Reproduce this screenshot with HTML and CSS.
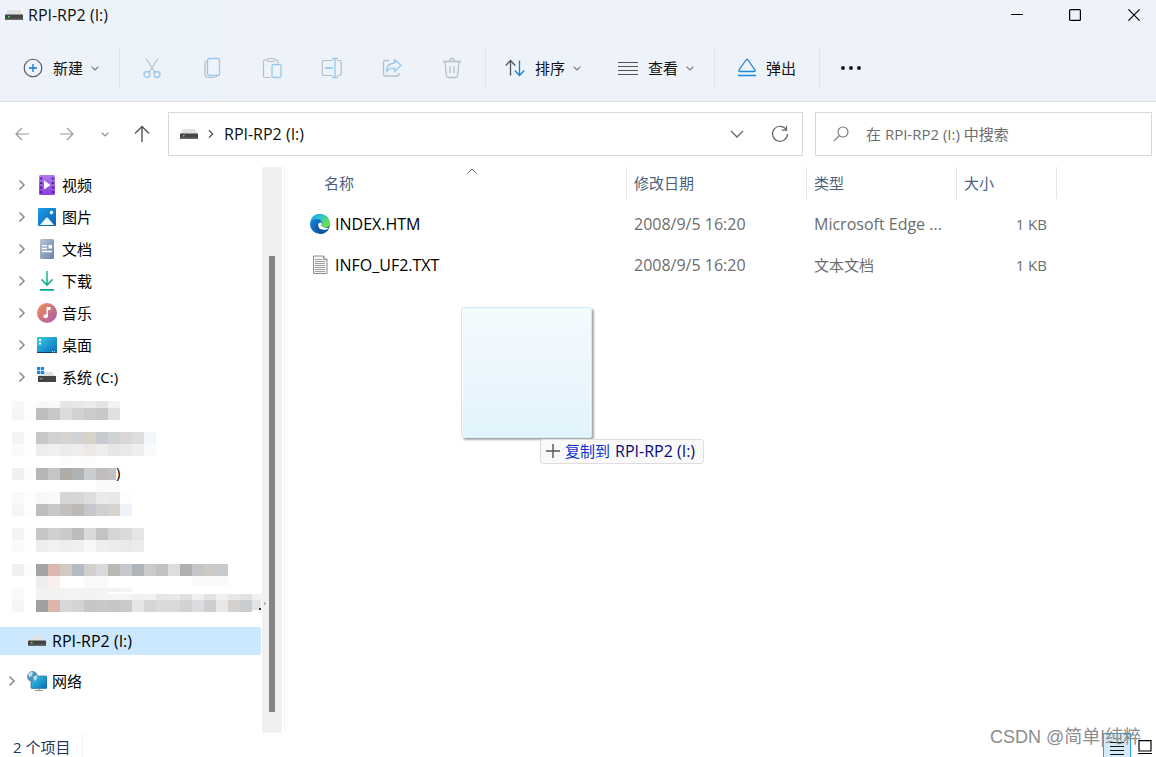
FILE: index.html
```html
<!DOCTYPE html>
<html lang="zh-CN">
<head>
<meta charset="utf-8">
<title>RPI-RP2 (I:)</title>
<link rel="stylesheet" href="styles.css">
</head>
<body>
<svg class="defs" aria-hidden="true">
  <defs>
    <linearGradient id="gVideo" x1="0" y1="0" x2="0" y2="1"><stop offset="0" stop-color="#b07af0"/><stop offset="1" stop-color="#8a3fe0"/></linearGradient>
    <linearGradient id="gPic" x1="0" y1="0" x2="1" y2="1"><stop offset="0" stop-color="#1c9de6"/><stop offset="1" stop-color="#0863b0"/></linearGradient>
    <linearGradient id="gDoc" x1="0" y1="0" x2="1" y2="1"><stop offset="0" stop-color="#b4c6da"/><stop offset="1" stop-color="#6884a4"/></linearGradient>
    <linearGradient id="gDown" x1="0" y1="0" x2="0" y2="1"><stop offset="0" stop-color="#35c48a"/><stop offset="1" stop-color="#0f9f9f"/></linearGradient>
    <linearGradient id="gMusic" x1="0" y1="0" x2="1" y2="1"><stop offset="0.1" stop-color="#ee8a5c"/><stop offset="1" stop-color="#a35bb0"/></linearGradient>
    <linearGradient id="gDesk" x1="0" y1="0" x2="1" y2="1"><stop offset="0" stop-color="#35d3e4"/><stop offset="1" stop-color="#0c66bd"/></linearGradient>
    <linearGradient id="gEdgeTop" x1="0" y1="0" x2="1" y2="0.5"><stop offset="0" stop-color="#1d9fe0"/><stop offset="0.5" stop-color="#2fc3d2"/><stop offset="1" stop-color="#6ee04c"/></linearGradient>
    <linearGradient id="gEdgeBody" x1="0" y1="0" x2="1" y2="1"><stop offset="0" stop-color="#1188dc"/><stop offset="1" stop-color="#0d4f9e"/></linearGradient>
  </defs>
  <symbol id="drive" viewBox="0 0 18 10">
    <path d="M3 0h12l3 5H0z" fill="#dfe1e3"/>
    <rect y="4.600" width="18" height="5.400" rx=".6" fill="#444"/>
    <rect y="8.500" width="18" height="1.500" rx=".6" fill="#666"/>
    <rect x="3" y="6" width="1.500" height="1.500" fill="#3fff4a"/>
  </symbol>
  <symbol id="right" viewBox="0 0 8 12"><path d="M1.500 1.500 6 6l-4.500 4.500" fill="none" stroke="currentColor" stroke-width="1.500"/></symbol>
  <symbol id="down" viewBox="0 0 8 5"><path d="M.6.6 4 4 7.400.6" fill="none" stroke="currentColor" stroke-width="1.100"/></symbol>
</svg>

<div class="window">
  <header class="top">
    <div class="titlebar">
      <svg class="drive"><use href="#drive"/></svg>
      <h1 class="title">RPI-RP2 (I:)</h1>
      <div class="caption">
        <button class="cap" aria-label="最小化"><svg width="12" height="12"><path d="M0 5.500h12" stroke="#000"/></svg></button>
        <button class="cap" aria-label="最大化"><svg width="12" height="12"><rect x=".6" y=".6" width="10.800" height="10.800" rx="1" fill="none" stroke="#000" stroke-width="1.200"/></svg></button>
        <button class="cap" aria-label="关闭"><svg width="12" height="12"><path d="M.4.4l11.200 11.200M11.600.4.400 11.600" stroke="#000" stroke-width="1.200"/></svg></button>
      </div>
    </div>
    <div class="commands">
      <button class="cmd new">
        <svg width="20" height="20" fill="none"><circle cx="10" cy="10" r="8.800" stroke="#555" stroke-width="1.100"/><path d="M10 6v8M6 10h8" stroke="#0f78c8" stroke-width="1.300"/></svg>
        <span>新建</span><svg class="chev"><use href="#down"/></svg>
      </button>
      <div class="group">
        <button class="tool" aria-label="剪切"><svg width="20" height="22" fill="none"><path d="M4 1.500l9.500 14.500M16 1.500 6.500 16" stroke="#b9bfc6" stroke-width="1.200"/><circle cx="5" cy="17.500" r="3" stroke="#98c8ee" stroke-width="1.300"/><circle cx="15" cy="17.500" r="3" stroke="#98c8ee" stroke-width="1.300"/></svg></button>
        <button class="tool" aria-label="复制"><svg width="20" height="22" fill="none"><path d="M5 4Q3 4.500 3 6.500v10q0 4 4 4h5q2 0 3-1.500" stroke="#b9bfc6" stroke-width="1.200"/><rect x="5.500" y="1.500" width="12" height="17" rx="2" stroke="#98c8ee" stroke-width="1.300"/></svg></button>
        <button class="tool" aria-label="粘贴"><svg width="20" height="22" fill="none"><path d="M6 3H3q-1.500 0-1.500 1.500V19q0 1.500 1.500 1.500h5M12 3h2.500Q16 3 16 4.500V6" stroke="#b9bfc6" stroke-width="1.200"/><rect x="5.500" y="1.500" width="7" height="3" rx="1.500" stroke="#b9bfc6" stroke-width="1.200"/><rect x="10" y="7.500" width="9" height="13" rx="1.500" stroke="#98c8ee" stroke-width="1.300"/></svg></button>
        <button class="tool" aria-label="重命名"><svg width="22" height="22" fill="none"><path d="M11.500 3.500H3q-1.700 0-1.700 1.700v11.600q0 1.700 1.700 1.700h8.500M16 3.500h2.500q1.700 0 1.700 1.700v11.600q0 1.700-1.700 1.700H16" stroke="#b9bfc6" stroke-width="1.200"/><path d="M4 11h8" stroke="#98c8ee" stroke-width="1.800"/><path d="M11 1.500h6M11 20.500h6M14 1.500v19" stroke="#98c8ee" stroke-width="1.300"/></svg></button>
        <button class="tool" aria-label="共享"><svg width="20" height="22" fill="none"><path d="M7 3.500H3.500Q1.500 3.500 1.500 5.500V17q0 2 2 2H15q2 0 2-2v-1" stroke="#b9bfc6" stroke-width="1.300"/><path d="M12.500 2.500l6.500 6-6.500 6v-3.400q-5-.4-8 3.400 0-8 8-8.500z" stroke="#98c8ee" stroke-width="1.300" stroke-linejoin="round"/></svg></button>
        <button class="tool" aria-label="删除"><svg width="20" height="22" fill="none"><path d="M1 4.500h18M3 4.500l1.400 14q.2 2 2 2h7.200q1.800 0 2-2l1.400-14M7.500 4.500q0-3 2.500-3t2.500 3M8 9v7M12 9v7" stroke="#b9bfc6" stroke-width="1.300"/></svg></button>
      </div>
      <button class="cmd sort">
        <svg width="20" height="18" fill="none" stroke-width="1.300"><path d="M5.500 16.500V1.500M.8 6.500l4.700-5 4.700 5" stroke="#555"/><path d="M14.500 1.500v15M9.800 11.500l4.700 5 4.700-5" stroke="#1280d8"/></svg>
        <span>排序</span><svg class="chev"><use href="#down"/></svg>
      </button>
      <button class="cmd view">
        <svg width="20" height="14"><path d="M0 1.500h20M0 5.500h20M0 9.500h20M0 13.500h20" stroke="#555"/></svg>
        <span>查看</span><svg class="chev"><use href="#down"/></svg>
      </button>
      <button class="cmd eject">
        <svg width="18" height="20" fill="none" stroke="#1c86d8" stroke-width="1.300"><path d="M8 2Q9 .8 10 2l7 10q.6 1.500-1 1.500H2Q.4 13.500 1 12zM0 17.500h18" stroke-linejoin="round"/></svg>
        <span>弹出</span>
      </button>
      <button class="cmd more" aria-label="更多"><svg width="20" height="4" fill="#111"><circle cx="2" cy="2" r="1.900"/><circle cx="10" cy="2" r="1.900"/><circle cx="18" cy="2" r="1.900"/></svg></button>
    </div>
  </header>

  <div class="addressrow">
    <nav class="history">
      <button aria-label="后退"><svg width="14" height="14" class="dim"><path d="M14 7H1M7 1 1 7l6 6"/></svg></button>
      <button aria-label="前进"><svg width="14" height="14" class="dim"><path d="M0 7h13M7 1l6 6-6 6"/></svg></button>
      <button class="small" aria-label="最近的位置"><svg class="chev"><use href="#down"/></svg></button>
      <button class="up" aria-label="上移"><svg width="16" height="18"><path d="M8 17V2M1 8.500 8 1.500l7 7"/></svg></button>
    </nav>
    <div class="address">
      <svg class="drive"><use href="#drive"/></svg>
      <svg class="crumb"><use href="#right"/></svg>
      <a href="#" class="path">RPI-RP2 (I:)</a>
      <button aria-label="历史记录"><svg width="14" height="8" fill="none"><path d="M1 1l6 6 6-6" stroke="#666" stroke-width="1.300"/></svg></button>
      <button class="refresh" aria-label="刷新"><svg width="18" height="18" fill="none"><path d="M15.500 5A7.500 7.500 0 1 0 16.500 9M15.500.8v4.400h-4.700" stroke="#666" stroke-width="1.200"/></svg></button>
    </div>
    <label class="search">
      <svg width="16" height="16" fill="none"><circle cx="10" cy="6" r="5" stroke="#777" stroke-width="1.100"/><path d="M6.500 9.500.8 15.200" stroke="#777" stroke-width="1.100"/></svg>
      <input type="text" aria-label="搜索" placeholder="在 RPI-RP2 (I:) 中搜索">
    </label>
  </div>

  <main class="body">
    <aside class="side">
      <div class="tree">
        <a href="#" class="node"><svg class="exp"><use href="#right"/></svg><svg width="20" height="20"><rect x="2" width="16" height="20" rx="1.500" fill="url(#gVideo)"/><path d="M3.200 3.500h2M3.200 8h2M3.200 12.500h2M3.200 17h2M14.800 3.500h2M14.800 8h2M14.800 12.500h2M14.800 17h2" stroke="#4b2184" stroke-width="1.800"/><path d="M7 5.500 13.500 10 7 14.500z" fill="#fff"/></svg>视频</a>
        <a href="#" class="node"><svg class="exp"><use href="#right"/></svg><svg width="20" height="20"><rect x="1" y="1" width="18" height="18" rx="1" fill="url(#gPic)"/><path d="M3 18l6.200-7.200q.8-.8 1.600 0L17 18z" fill="#eef6fd"/><circle cx="14.500" cy="5.500" r="1.700" fill="#fff"/></svg>图片</a>
        <a href="#" class="node"><svg class="exp"><use href="#right"/></svg><svg width="20" height="20"><rect x="3" width="14" height="20" rx="1.500" fill="url(#gDoc)"/><path d="M5 6.700h5M5 9.500h5M5 12.500h10" stroke="#fff" stroke-width="1.300"/><rect x="11.500" y="6" width="3.500" height="3.500" fill="#fff"/></svg>文档</a>
        <a href="#" class="node"><svg class="exp"><use href="#right"/></svg><svg width="20" height="20"><path d="M9.200 0h1.600v12l4.200-4.200 1.100 1.100L10 15.200 3.900 8.900 5 7.800 9.200 12zM3 18h14v1.800H3z" fill="url(#gDown)"/></svg>下载</a>
        <a href="#" class="node"><svg class="exp"><use href="#right"/></svg><svg width="20" height="20"><circle cx="10" cy="10" r="10" fill="url(#gMusic)"/><ellipse cx="8.700" cy="13.200" rx="2.200" ry="2" fill="#fff"/><path d="M9.500 13V4h4v3h-2.600v6z" fill="#fff"/></svg>音乐</a>
        <a href="#" class="node"><svg class="exp"><use href="#right"/></svg><svg width="20" height="20"><rect y="2" width="20" height="16" rx="1" fill="url(#gDesk)"/><path d="M0 17h20v.2q0 .8-.8.8H.8Q0 18 0 17.200z" fill="#063c6c"/><path d="M2 4h2v2H2zM2 7.500h2v2H2z" fill="#fff"/><path d="M15 16.800h1M17 16.800h1" stroke="#fff"/></svg>桌面</a>
        <a href="#" class="node"><svg class="exp"><use href="#right"/></svg><svg width="20" height="20"><path d="M3 5h12l4 5H1z" fill="#dfe1e3"/><rect x="1" y="9" width="18" height="6" rx=".6" fill="#444"/><rect x="3.500" y="11" width="1.500" height="1.500" fill="#3fff4a"/><path d="M0 0h3.200v3.200H0zM3.900 0h3.200v3.200H3.900zM0 3.900h3.200v3.200H0zM3.900 3.900h3.200v3.200H3.900z" fill="#1688d8"/></svg>系统 (C:)</a>
        <svg class="mosaic" width="268" height="234" shape-rendering="crispEdges" aria-hidden="true"><text x="116" y="85">)</text><path d="M259 215h2v2h-2z" fill="#333"/><path d="M264 209l2 1.500-2 1.500z" fill="#aaa"/></svg>
        <a href="#" class="node root selected"><svg class="drive"><use href="#drive"/></svg>RPI-RP2 (I:)</a>
        <a href="#" class="node root network"><svg class="exp"><use href="#right"/></svg><svg width="20" height="20"><rect x="4" y="5" width="16" height="12.500" rx=".8" fill="url(#gDesk)" stroke="#15618f" stroke-width=".6"/><path d="M12 17.500V19.500M8 19.500h8" stroke="#8b979f" stroke-width="1.200"/><circle cx="5.500" cy="5.500" r="5.400" fill="#4d94bf"/><path d="M1 3Q4 0 6 1L5 5 2 6zM6 6l4-2q1 4-2.500 6z" fill="#b9deef"/></svg>网络</a>
      </div>
      <div class="scroll"><div class="thumb"></div></div>
    </aside>

    <section class="files">
      <table>
        <colgroup><col class="c-name"><col class="c-date"><col class="c-type"><col class="c-size"><col></colgroup>
        <thead><tr>
          <th class="name"><span>名称</span><svg class="asc" width="10" height="6" fill="none"><path d="M.5 5.500 5 1l4.500 4.500" stroke="#666"/></svg></th>
          <th><span>修改日期</span></th><th><span>类型</span></th><th><span>大小</span></th><td></td>
        </tr></thead>
        <tbody>
          <tr><td class="name"><a href="#"><svg width="20" height="20"><circle cx="10" cy="10" r="10" fill="url(#gEdgeBody)"/><path d="M.2 9Q1 0 10 0q9 .4 10 9 0 4.500-4.500 4.500-3 0-4-1.500 1.500-1.500.5-4Q10.500 5 6.500 5 2 5.200.2 9z" fill="url(#gEdgeTop)"/><path d="M11.500 8.500Q8.500 8 8 11q0 4.500 5 5 3 .2 6-1.500-1.500-.5-3.500-.8-3-.2-4.300-1.900 1.200-1.500.3-3.300z" fill="#fff"/><path d="M6 11q-1 6 5 8.900 5-.4 7.800-5-3 1.300-5.800.9Q7.500 15.300 8 10.300 6.500 9.500 6 11z" fill="#0e55a6"/></svg>INDEX.HTM</a></td><td>2008/9/5 16:20</td><td>Microsoft Edge ...</td><td class="num">1 KB</td><td></td></tr>
          <tr><td class="name"><a href="#"><svg width="20" height="20"><path d="M3.500 1h10l3.500 3.500V18.500H3.500z" fill="#f5f5f5" stroke="#8c8c8c"/><path d="M13.500 1v3.500H17" fill="#ddd" stroke="#8c8c8c"/><path d="M5 4.500h7M5 6.500h10M5 8.500h10M5 10.500h10M5 12.500h10M5 14.500h10M5 16.500h10" stroke="#a0a0a0"/></svg>INFO_UF2.TXT</a></td><td>2008/9/5 16:20</td><td class="han">文本文档</td><td class="num">1 KB</td><td></td></tr>
        </tbody>
      </table>
      <div class="ghost"></div>
      <div class="droptip"><svg width="14" height="14"><path d="M7 0v14M0 7h14" stroke="#555" stroke-width="1.400"/></svg><span class="verb">复制到</span><span class="target">RPI-RP2 (I:)</span></div>
    </section>
  </main>

  <footer class="status">
    <span class="count">2 个项目</span>
    <div class="modes">
      <button class="mode on" aria-label="详细信息"><svg width="14" height="14"><path d="M0 .5h14M0 4.500h14M0 8.500h14M0 12.500h14" stroke="#111"/></svg></button>
      <button class="mode" aria-label="大图标"><svg width="14" height="14"><path d="M1 .6h12v10.400H1zM0 13.500h14" fill="none" stroke="#000" stroke-width="1.200"/></svg></button>
    </div>
    <span class="mark">CSDN @简单|纯粹</span>
  </footer>
</div>
<script src="mosaic.js"></script>
</body>
</html>
```
FILE: styles.css
```css
* { box-sizing: border-box; }
body {
  margin: 0;
  background: #fff;
  color: #111;
  font: 15px/20px "Open Sans", "Noto Sans CJK SC", sans-serif;
}
button, input { font: inherit; color: inherit; border: 0; background: none; padding: 0; }
a { color: inherit; text-decoration: none; }
svg { display: block; flex: none; }
.defs { position: absolute; width: 0; height: 0; }
.window { display: flex; flex-direction: column; height: 100vh; overflow: hidden; }
.drive { width: 18px; height: 10px; }
.chev { width: 8px; height: 5px; color: #777; }

.top { background: linear-gradient(90deg, #eef3fb, #edf3f8 50%); border-bottom: 1px solid #dcdfe3; }
.titlebar { display: flex; align-items: center; height: 32px; padding: 0 0 2px 5px; gap: 5px; }
.title { margin: 0; font-size: 16px; font-weight: 400; }
.caption { display: flex; margin-left: auto; }
.cap { width: 58px; height: 30px; display: grid; place-items: center; }
.cap:last-child { width: 52px; padding-left: 8px; }

.commands { display: flex; align-items: center; height: 69px; padding-top: 3px; }
.cmd { display: flex; align-items: center; gap: 10px; height: 40px; }
.cmd .chev { margin-left: -2px; }
.new { padding: 0 20px 0 23px; border-right: 1px solid #dde2e8; }
.group { display: flex; padding: 0 3px 0 2px; border-right: 1px solid #dde2e8; }
.tool { display: grid; place-items: center; width: 60px; height: 40px; }
.sort { padding: 0 18px 0 19px; }
.view { padding: 0 20px 0 19px; border-right: 1px solid #dde2e8; }
.eject { padding: 0 23px 0 23px; border-right: 1px solid #dde2e8; }
.more { padding: 0 21px; }

.addressrow { display: flex; align-items: center; padding: 10px 4px 11px 0; }
.history { display: flex; flex: none; width: 168px; }
.history button { display: grid; place-items: center; width: 46px; height: 44px; }
.history button:first-child { width: 44px; }
.history .small { width: 30px; }
.history .up { width: 44px; }
.history svg { fill: none; stroke: #555; stroke-width: 1.4; }
.history .dim { stroke: #999; stroke-width: 1.2; }
.history .chev { stroke: none; color: #888; }
.address, .search { display: flex; align-items: center; height: 44px; border: 1px solid #d9d9d9; background: #fff; }
.address { flex: 609 1 0; padding: 0 13px 0 11px; }
.crumb { width: 8px; height: 10px; margin: 0 9px 0 9px; color: #555; }
.path { flex: 1; font-size: 16px; }
.refresh { margin-left: 27px; }
.search { flex: 301 1 0; margin-left: 12px; padding: 0 17px; gap: 17px; }
.search input { flex: 1; min-width: 0; outline: 0; }
.search input::placeholder { color: #6d6d6d; opacity: 1; }

.body { display: flex; flex: 1; min-height: 0; }
.side { display: flex; width: 285px; border-right: 1px solid #f3f3f3; padding-right: 2px; }
.tree { flex: 1; min-width: 0; padding-top: 2px; }
.node { display: flex; align-items: center; height: 32px; padding-left: 18px; gap: 5px; color: #000; }
.exp { width: 8px; height: 12px; margin-right: 6px; color: #8a8a8a; }
.mosaic { position: relative; }
.mosaic text { font-size: 15px; }
.root { padding-left: 8px; }
.selected { height: 28px; padding-left: 28px; gap: 6px; background: #cce8ff; border-radius: 0 2px 2px 0; margin-right: 1px; font-size: 16px; }
.network { margin-top: 10px; }
.scroll { width: 20px; background: #f0f0f0; padding: 89px 7px 21px; display: flex; }
.thumb { flex: 1; background: #858585; }

.files { position: relative; flex: 1; min-width: 0; }
table { width: 100%; table-layout: fixed; border-collapse: collapse; }
.c-name { width: 342px; }
.c-date { width: 180px; }
.c-type { width: 150px; }
.c-size { width: 100px; }
th { padding: 0 0 4px; font-weight: 400; text-align: left; color: #4b5f7e; position: relative; }
th span { display: block; height: 32px; padding: 6px 7px; border-right: 1px solid #e5e5e5; }
.asc { position: absolute; left: 182px; top: 1px; }
td { padding: 0 7px; height: 41px; color: #6d6d6d; font-size: 16px; }
.han { font-size: 15px; }
thead td { height: auto; }
td.name { padding-left: 25px; color: #000; }
th.name span { padding-left: 39px; }
td.name a { display: flex; align-items: center; gap: 5px; }
.num { text-align: right; padding-right: 10px; font-size: 15px; }
.ghost {
  position: absolute; left: 176px; top: 140px; width: 131px; height: 131px;
  border: 1px solid #c9ebf8; border-radius: 3px;
  background: linear-gradient(#f4fbfe, #eaf6fd 60%, #e0f3fc);
  box-shadow: inset 0 0 0 1px #f2fbff, 2px 2px 2px #aaa;
}
.droptip {
  position: absolute; left: 255px; top: 272px; display: flex; align-items: center; gap: 5px;
  height: 25px; padding: 0 8px 2px 5px; border: 1px solid #dedede; border-radius: 3px;
  background: #f9f9f9; color: #0a0a7a; white-space: nowrap;
}
.verb { color: #0a32d0; }
.target { font-size: 16px; }

.status { position: relative; display: flex; height: 24px; padding-left: 13px; color: #1f3a5f; }
.count { height: 28px; line-height: 28px; padding-right: 12px; border-right: 1px solid #f0f0f0; }
.modes { display: flex; margin-left: auto; }
.mode { display: grid; place-items: start; width: 28px; height: 30px; padding: 7px 0 0 7px; }
.mode.on { background: #d5ebfa; border: 1px solid #2a9fe0; padding: 8px 0 0 6px; }
.mode:last-child { width: 25px; }
.mark { position: absolute; right: 15px; top: -10px; font: 18px/28px "Liberation Sans", "Noto Sans CJK SC", sans-serif; color: #8c8c8c; }
```
FILE: mosaic.js
```js
// Pixelated blocks over the private drive names: [y, height, first x, colours of 12px cells]
const rows = [
  [8, 7, 12, "f8f8f8 fdfdfd f8f8f8 f9fbfa e5e5e5 e6e7e6 ebedec e4e4e4 f2f2f2"],
  [15, 12, 12, "f5f5f5 fdfdfd bcbebc c8c8c8 dddbd9 d2d2d2 cacccb c8c8c7 dfe1e0"],
  [39, 12, 12, "f4f4f4 fdfdfd c6c8c7 d1d1d1 d5d2cf d0d2d5 d6d3c9 c6c9ce d0d2d3 dbd7d6 dcdedb f3f7fa"],
  [51, 12, 12, "fafafa fefefe ededed f0f0f0 ebebeb ededee ebe8e5 ededee e6e6e6 e9e9e9 f0eeed f9fafc"],
  [63, 9, 60, "fbfbfb fdfefc fbfcfc"],
  [75, 12, 12, "f0f0f0 fcfcfc b5b7b6 c4c6c5 afaca8 b1b3b2 cacdd0 c0bdbc"],
  [75, 12, 108, "c0c2c4", 8],
  [87, 12, 96, "fafafa fafafa"],
  [99, 12, 12, "f9f9f9 fdfdfd f7f7f7 f9fbfa d7d5d4 d5d7d6 dddde0 e9ebea eae7e8 fbfdfe"],
  [111, 12, 12, "f5f5f5 fdfdfd bcbebc c8c8c8 c4bfbc bbbab9 c6c7cd cfcfcf d8d2cf edf3f8"],
  [135, 12, 12, "f4f4f4 fefefe c4c7c6 d0d0d0 cacaca bcbcbb d9dbda c3c3c1 d4d5d7 d9d9d9 e4e6e5"],
  [147, 12, 12, "fafafa fefefe ededed f1f1f1 ededed f0efec f5f8f7 eeeeee ececec e9e9e9 eaeceb"],
  [171, 12, 12, "efefef fcfcfc a3a3a3 dab8b0 cfcbc2 b2bbc6 d1cfca d8d9da b9b9b3 c6c7cc afb4b8 cbcbcb c3c1c2 dcdedd b1afaf c4c5c8 ccc8c6 c8c9cb"],
  [183, 12, 36, "eeeeee faefec ffffff ffffff fafafa fafafa"],
  [183, 10, 192, "fafafa fafafa fafafa"],
  [195, 12, 12, "fafafa ffffff f2f2f2 f2f2f2 f3f3f2 f3f3f2 f1f3f2 f3f3f3"],
  [195, 4, 108, "f2f2f2 f5f5f5"],
  [201, 6, 108, "f5f5f5 f5f5f5 f1f1f1 f2f2f2 e6e6e6 e9e9e9 e0e0e0 efefef e2e2e4 f0f0f0 e9e8e7 e2e2e2 f1f1f1"],
  [207, 12, 12, "f6f6f6 ffffff a0a0a0 dab5aa d7d9d7 d3d4d1 c5c6c8 c8c8c8 c6c6c7 c9c9c9 e5e5e5 d4d6d5 dadada d9d9d8 d3d2d0 dcdcde cdced1 e7e7e7 d5d1ce c9cdcf"],
  [207, 10, 252, "e3e3e2", 9]
];
const svg = document.querySelector(".mosaic");
for (const [y, h, x0, cells, w = 12] of rows) {
  cells.split(" ").forEach((c, i) => {
    const r = document.createElementNS("http://www.w3.org/2000/svg", "rect");
    for (const [k, v] of Object.entries({ x: x0 + i * 12, y, width: w, height: h, fill: "#" + c })) r.setAttribute(k, v);
    svg.prepend(r);
  });
}
```
